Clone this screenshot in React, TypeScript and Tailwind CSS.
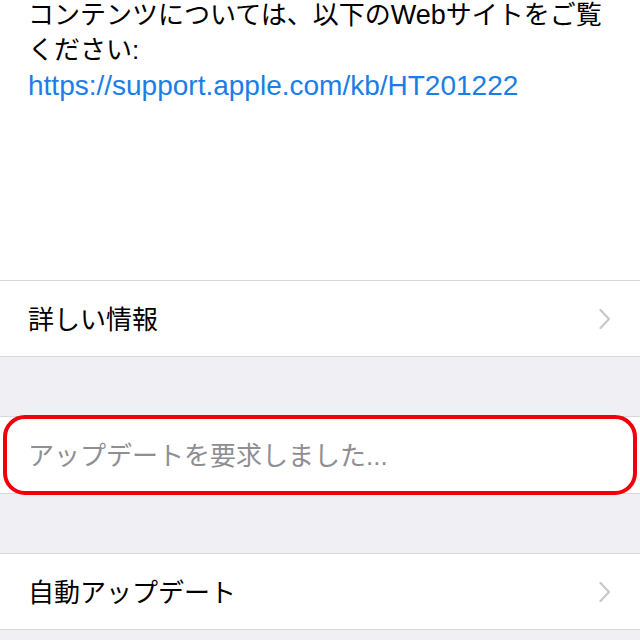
import React from "react";

const jp = { fontFamily: '"Liberation Sans", "Noto Sans CJK JP", sans-serif' };

const Chevron = () => (
  <svg width="14" height="22" viewBox="0 0 14 22" fill="none">
    <path d="M2.5 2L11 11L2.5 20" stroke="#c7c7cc" strokeWidth="2.2" strokeLinecap="round" strokeLinejoin="round" />
  </svg>
);

const Row = ({ label }: { label: string }) => (
  <div className="flex h-[77px] items-center justify-between border-y border-[#d8d8dc] bg-white pl-[28px] pr-[28px]">
    <span className="pt-[3px] text-[26px] text-black">{label}</span>
    <Chevron />
  </div>
);

export default function App() {
  return (
    <div className="h-[640px] w-[640px] overflow-hidden bg-[#efeff4]" style={jp}>
      <div className="h-[280px] bg-white px-[28px]">
        <p className="relative -top-[2px] text-[26px] leading-[35px] text-black">
          コンテンツについては、以下の<span className="text-[27px]">Web</span>サイトをご覧
          <br />
          ください:
          <br />
          <span className="text-[28px] text-[#1a7ee6]">https://support.apple.com/kb/HT201222</span>
        </p>
      </div>
      <Row label="詳しい情報" />
      <div className="h-[59px]" />
      <div className="relative">
        <div className="flex h-[78px] items-center border-y border-[#d8d8dc] bg-white pl-[28px]">
          <span className="pt-[2px] text-[26px] text-[#8e8e93]">アップデートを要求しました...</span>
        </div>
        <div className="pointer-events-none absolute -top-[1px] left-[3px] right-[3px] h-[80px] rounded-[22px] border-[4px] border-[#f0000d]" />
      </div>
      <div className="h-[59px]" />
      <Row label="自動アップデート" />
    </div>
  );
}
